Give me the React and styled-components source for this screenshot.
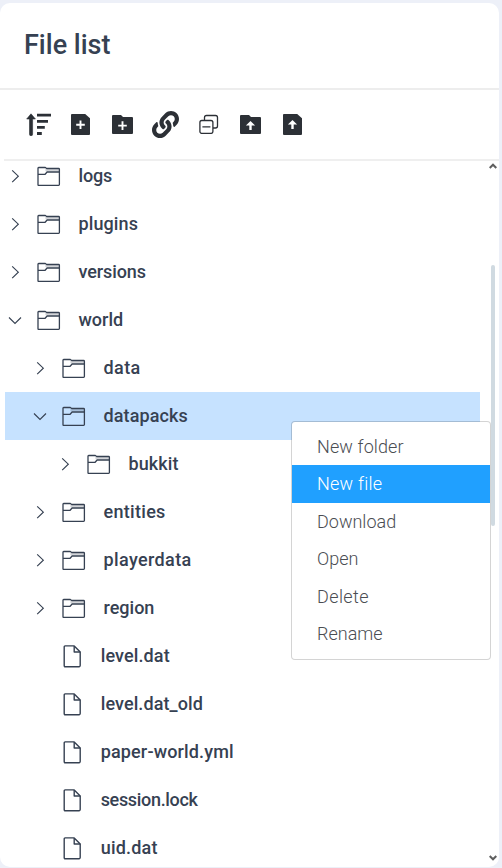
import React from 'react';
import styled, { createGlobalStyle, css } from 'styled-components';
import { FaLink } from 'react-icons/fa';

const GlobalStyle = createGlobalStyle`
  * { box-sizing: border-box; }
  body {
    margin: 0;
    background: #edf0f8;
    color: #364152;
    font-family: Roboto, "Liberation Sans", sans-serif;
    overflow: hidden;
  }
  svg { display: block; flex: none; }
`;

const Page = styled.div`
  position: relative;
  height: 868px;
  padding: 3px 3px 1px 0;
`;

const Card = styled.section`
  display: flex;
  flex-direction: column;
  height: 864px;
  background: #fff;
  border-radius: 10px;
  overflow: hidden;
`;

const Header = styled.header`
  display: flex;
  align-items: center;
  flex: none;
  height: 87px;
  padding: 0 24px 1px;
  border-bottom: 2px solid #ededed;
`;

const Title = styled.h1`
  margin: 0;
  font-size: 27px;
  line-height: 32px;
  font-weight: 500;
`;

const Toolbar = styled.div`
  display: flex;
  align-items: center;
  flex: none;
  height: 71px;
  margin-left: 4px;
  padding: 0 0 1px 18px;
  border-bottom: 2px solid #efefef;
  color: #2c3036;
`;

const ToolButton = styled.button`
  display: flex;
  align-items: center;
  justify-content: center;
  width: ${(p) => p.$width || 42}px;
  height: 32px;
  padding: 0;
  border: 0;
  background: none;
  color: inherit;
  &:first-child { margin-right: 4px; }
`;

const Body = styled.div`
  display: flex;
  flex: 1;
  min-height: 0;
  padding-left: 5px;
`;

const Tree = styled.div`
  width: 475px;
  overflow: hidden;
`;

const TreeInner = styled.div`
  margin-top: -9px;
`;

const Row = styled.div`
  display: flex;
  align-items: center;
  height: 48px;
  padding-left: ${(p) => p.$level * 25}px;
  ${(p) => p.$active && css`background: #c6e2ff;`}
`;

const Arrow = styled.span`
  width: 20px;
  height: 20px;
  margin-right: 12px;
`;

const Label = styled.span`
  margin-left: ${(p) => (p.$file ? 18.7 : 17.5)}px;
  padding-bottom: 1px;
  font-size: 18px;
  font-weight: 500;
  line-height: 24px;
  white-space: nowrap;
  letter-spacing: ${(p) => p.$track}px;
`;

const Scrollbar = styled.div`
  display: flex;
  flex-direction: column;
  align-items: center;
  width: 14px;
  margin-left: 5px;
  padding: 1px 0 5px 1px;
`;

const Thumb = styled.div`
  width: 4px;
  height: 261px;
  margin: 95px 0 auto;
  border-radius: 2px;
  background: #d0dae1;
`;

const Menu = styled.ul`
  position: absolute;
  left: 291px;
  top: 421px;
  width: 200px;
  height: 239px;
  margin: 0;
  padding: 5.5px 0;
  list-style: none;
  background: #fff;
  background-clip: padding-box;
  border: 1px solid rgba(0, 0, 0, 0.17);
  border-radius: 4px;
`;

const MenuItem = styled.li`
  height: 37.5px;
  padding-left: 25px;
  font-size: 18px;
  font-weight: 300;
  line-height: 38px;
  color: ${(p) => (p.$active ? '#fff' : '#4a4d52')};
  background: ${(p) => (p.$active ? '#20a0ff' : 'transparent')};
  letter-spacing: ${(p) => p.$track}px;
`;

const SortIcon = () => (
  <svg width="26" height="24" viewBox="0 0 26 24" fill="currentColor">
    <path d="M5 1.8 9.4 7H6.6V22.2a1.5 1.5 0 0 1-3.1 0V7H.7Z" stroke="currentColor" strokeWidth=".6" strokeLinejoin="round" />
    <path d="M11 1.7h14v2.9H11zM11 7.9h11v2.8H11zM11 13.9h7.8v2.8H11zM11 20h4.8v3H11z" />
  </svg>
);

const Glyph = ({ kind }) =>
  kind === 'plus' ? (
    <path d="M0-4.3V4.3M-4.3 0H4.3" stroke="#fff" strokeWidth="1.9" />
  ) : (
    <path d="M0-4.6 4.6-.1H1.2V4.4H-1.2V-.1H-4.6Z" fill="#fff" />
  );

const FileToolIcon = ({ kind }) => (
  <svg width="20" height="22" viewBox="0 0 20 22">
    <path d="M.9 1H14.2L19 5.3V21Q19 22 18 22H1Q0 22 0 21V1.9Q0 1 .9 1Z" fill="currentColor" />
    <g transform="translate(9.5 11.7)"><Glyph kind={kind} /></g>
  </svg>
);

const FolderToolIcon = ({ kind }) => (
  <svg width="22" height="20" viewBox="0 0 22 20">
    <path d="M1 1H9L11 3H20Q21 3 21 4V19Q21 20 20 20H1Q0 20 0 19V2Q0 1 1 1Z" fill="currentColor" />
    <g transform="translate(10.5 11.6)"><Glyph kind={kind} /></g>
  </svg>
);

const CollapseIcon = () => (
  <svg width="21" height="20" viewBox="0 0 21 20" fill="none" stroke="currentColor" strokeWidth="1.3">
    <path d="M6.5 6V3.5Q6.5 1.5 8.5 1.5H17.5Q19.5 1.5 19.5 3.5V12Q19.5 14 17.5 14H15" />
    <rect x="1.9" y="6.5" width="13" height="12.9" rx="2" />
    <path d="M4.4 12.9h8" />
  </svg>
);

const Chevron = ({ open }) => (
  <svg width="20" height="20" viewBox="0 0 20 20" fill="none" stroke="currentColor" strokeWidth="1.15">
    <path d={open ? 'M4 7.5 10 13.4 16 7.5' : 'M7.2 4.3 13.3 10.2 7.2 16.1'} />
  </svg>
);

const FolderIcon = () => (
  <svg width="24" height="22" viewBox="0 0 24 22" fill="none" stroke="currentColor" strokeWidth="1.3" strokeLinejoin="round">
    <path d="M9 3.8H22V6.5H9L8 5Z" fill="currentColor" fillOpacity=".22" stroke="none" />
    <path d="M1 20.3V3.2Q1 2.5 1.7 2.5H8.3L9.7 3.5H21.6Q22.4 3.5 22.4 4.3V19.6Q22.4 20.4 21.6 20.4H1.7Q1 20.4 1 19.6" />
    <path d="M1 9.3H8.1L10.1 7H22.4" />
  </svg>
);

const FileIcon = () => (
  <svg width="20" height="24" viewBox="0 0 20 24" fill="none" stroke="currentColor" strokeWidth="1.4" strokeLinejoin="round">
    <path d="M3.2 1.9H12.2L18.2 8V21.6Q18.2 22.7 17.2 22.7H3.2Q2.2 22.7 2.2 21.6V3Q2.2 1.9 3.2 1.9Z" />
    <path d="M12.2 2V8H18.2" />
  </svg>
);

const ScrollArrow = ({ down }) => (
  <svg width="8" height="8" viewBox="0 0 8 8" fill="none" stroke="#606060" strokeWidth="2.1">
    <path d={down ? 'M.7 2 4 5.3 7.3 2' : 'M.7 6 4 2.7 7.3 6'} />
  </svg>
);

const nodes = [
  { name: 'logs', level: 0, track: -0.2 },
  { name: 'plugins', level: 0, track: 0.1 },
  { name: 'versions', level: 0, track: -0.1 },
  { name: 'world', level: 0, track: 0 },
  { name: 'data', level: 1, track: 0.4 },
  { name: 'datapacks', level: 1, track: 0.12, active: true },
  { name: 'bukkit', level: 2, track: 0.1 },
  { name: 'entities', level: 1, track: 0.3 },
  { name: 'playerdata', level: 1, track: 0.38 },
  { name: 'region', level: 1, track: 0 },
  { name: 'level.dat', level: 1, track: 0.12, file: true },
  { name: 'level.dat_old', level: 1, track: 0.1, file: true },
  { name: 'paper-world.yml', level: 1, track: 0.15, file: true },
  { name: 'session.lock', level: 1, track: -0.33, file: true },
  { name: 'uid.dat', level: 1, track: 0.2, file: true },
];

const expanded = ['world', 'datapacks'];

const actions = [
  { name: 'New folder', track: 0.12 },
  { name: 'New file', track: 0.22, active: true },
  { name: 'Download', track: 0 },
  { name: 'Open', track: 0 },
  { name: 'Delete', track: 0.4 },
  { name: 'Rename', track: 0 },
];

export default function App() {
  return (
    <Page>
      <GlobalStyle />
      <Card>
        <Header><Title>File list</Title></Header>
        <Toolbar>
          <ToolButton aria-label="Sort" $width={34}><SortIcon /></ToolButton>
          <ToolButton aria-label="New file"><FileToolIcon kind="plus" /></ToolButton>
          <ToolButton aria-label="New folder"><FolderToolIcon kind="plus" /></ToolButton>
          <ToolButton aria-label="Link" $width={43}><FaLink size={27} /></ToolButton>
          <ToolButton aria-label="Collapse all" $width={43}><CollapseIcon /></ToolButton>
          <ToolButton aria-label="Upload folder"><FolderToolIcon kind="up" /></ToolButton>
          <ToolButton aria-label="Upload file"><FileToolIcon kind="up" /></ToolButton>
        </Toolbar>
        <Body>
          <Tree>
            <TreeInner>
              {nodes.map((n) => (
                <Row key={n.name} $level={n.level} $active={n.active}>
                  <Arrow>{!n.file && <Chevron open={expanded.includes(n.name)} />}</Arrow>
                  {n.file ? <FileIcon /> : <FolderIcon />}
                  <Label $file={n.file} $track={n.track}>{n.name}</Label>
                </Row>
              ))}
            </TreeInner>
          </Tree>
          <Scrollbar>
            <ScrollArrow />
            <Thumb />
            <ScrollArrow down />
          </Scrollbar>
        </Body>
      </Card>
      <Menu>
        {actions.map((a) => (
          <MenuItem key={a.name} $active={a.active} $track={a.track}>{a.name}</MenuItem>
        ))}
      </Menu>
    </Page>
  );
}
